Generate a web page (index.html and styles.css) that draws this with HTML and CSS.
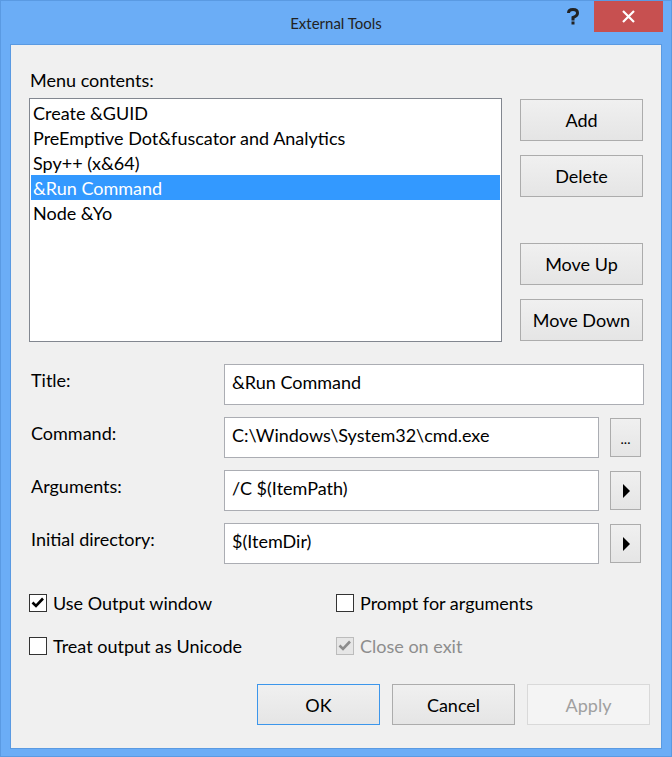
FILE: index.html
```html
<!DOCTYPE html>
<html lang="en">
<head>
    <meta charset="UTF-8">
    <title>External Tools</title>
    <link rel="stylesheet" href="styles.css">
</head>
<body>
    <div class="window">
        <div class="titlebar">
            <span></span>
            <span class="title">External Tools</span>
            <div class="caption">
                <svg class="help" width="12" height="17" viewBox="0 0 12 17">
                    <path d="M1.5 5 Q1.5 1.5 6 1.5 Q10.5 1.5 10.5 5 Q10.5 8 6 9.5 V12.5" stroke="#222" stroke-width="3" fill="none"/>
                    <rect x="4.5" y="13.5" width="3" height="3" fill="#222"/>
                </svg>
                <div class="close">
                    <svg width="13" height="13" viewBox="0 0 13 13">
                        <path d="M1 1 L12 12 M12 1 L1 12" stroke="#fff" stroke-width="2.2"/>
                    </svg>
                </div>
            </div>
        </div>

        <div class="client">
            <div class="caption-label">Menu contents:</div>
            <div class="menu-row">
                <div class="listbox">
                    <div class="item">Create &amp;GUID</div>
                    <div class="item">PreEmptive Dot&amp;fuscator and Analytics</div>
                    <div class="item">Spy++ (x&amp;64)</div>
                    <div class="item selected">&amp;Run Command</div>
                    <div class="item">Node &amp;Yo</div>
                </div>
                <div class="side-buttons">
                    <div class="btn">Add</div>
                    <div class="btn">Delete</div>
                    <div class="btn push">Move Up</div>
                    <div class="btn">Move Down</div>
                </div>
            </div>

            <div class="fields">
                <div class="field-row">
                    <div class="field-label">Title:</div>
                    <div class="textbox wide">&amp;Run Command</div>
                </div>
                <div class="field-row">
                    <div class="field-label">Command:</div>
                    <div class="textbox">C:\Windows\System32\cmd.exe</div>
                    <div class="btn small dots">...</div>
                </div>
                <div class="field-row">
                    <div class="field-label">Arguments:</div>
                    <div class="textbox">/C $(ItemPath)</div>
                    <div class="btn small"><span class="arrow"></span></div>
                </div>
                <div class="field-row">
                    <div class="field-label">Initial directory:</div>
                    <div class="textbox">$(ItemDir)</div>
                    <div class="btn small"><span class="arrow"></span></div>
                </div>
            </div>

            <div class="options">
                <div class="check">
                    <span class="box"><svg width="16" height="16" viewBox="0 0 16 16"><path d="M2.5 7.5 L6 11 L13 3.5" stroke="#000" stroke-width="2.6" fill="none"/></svg></span>
                    Use Output window
                </div>
                <div class="check">
                    <span class="box"></span>
                    Prompt for arguments
                </div>
                <div class="check">
                    <span class="box"></span>
                    Treat output as Unicode
                </div>
                <div class="check disabled">
                    <span class="box"><svg width="16" height="16" viewBox="0 0 16 16"><path d="M2.5 7.5 L6 11 L13 3.5" stroke="#8c8c8c" stroke-width="2.6" fill="none"/></svg></span>
                    Close on exit
                </div>
            </div>

            <div class="dialog-buttons">
                <div class="btn wide-btn default">OK</div>
                <div class="btn wide-btn">Cancel</div>
                <div class="btn wide-btn off">Apply</div>
            </div>
        </div>
    </div>
</body>
</html>
```

FILE: styles.css
```css
:root {
    --frame: #6badf6;
    --frame-edge: #5a9ae2;
    --face: #f0f0f0;
    --ui-font: Lato, "Noto Sans", sans-serif;
}
* {
    box-sizing: border-box;
}
body {
    margin: 0;
    font-family: var(--ui-font);
    font-size: 18px;
    color: #000;
}
.window {
    width: 672px;
    height: 757px;
    display: flex;
    flex-direction: column;
    background: var(--frame);
    border: 1px solid var(--frame-edge);
}
.titlebar {
    height: 43px;
    display: grid;
    grid-template-columns: 1fr auto 1fr;
    align-items: center;
}
.title {
    font-size: 15px;
    color: #222;
}
.caption {
    justify-self: end;
    align-self: start;
    display: flex;
    margin-right: 8px;
}
.help {
    margin: 7px 15px 0 0;
}
.close {
    width: 69px;
    height: 31px;
    background: #c75050;
    display: flex;
    align-items: center;
    justify-content: center;
}
.client {
    flex: 1;
    margin: 0 9px 7px 9px;
    background: var(--face);
    border: 1px solid var(--frame-edge);
    padding: 23px 11px 0 18px;
}
.caption-label {
    line-height: 24px;
    padding-left: 1px;
}
.menu-row {
    display: flex;
    gap: 18px;
    margin-top: 6px;
}
.listbox {
    width: 473px;
    height: 244px;
    background: #fff;
    border: 1px solid #828790;
    padding: 1px;
}
.item {
    height: 25px;
    line-height: 26px;
    padding-left: 2px;
    white-space: nowrap;
}
.item.selected {
    background: #3399ff;
    color: #fff;
}
.side-buttons {
    width: 123px;
    display: flex;
    flex-direction: column;
    gap: 14px;
    padding: 1px 0;
}
.side-buttons .btn {
    height: 42px;
}
.side-buttons .push {
    margin-top: auto;
}
.btn {
    display: flex;
    align-items: center;
    justify-content: center;
    background: linear-gradient(#f0f0f0, #e5e5e5);
    border: 1px solid #acacac;
}
.fields {
    margin-top: 22px;
    display: flex;
    flex-direction: column;
    gap: 12px;
}
.field-row {
    display: flex;
    height: 41px;
}
.field-label {
    width: 195px;
    padding: 4px 0 0 2px;
    line-height: 24px;
}
.textbox {
    width: 375px;
    height: 41px;
    background: #fff;
    border: 1px solid #abadb3;
    padding: 5px 7px 0 7px;
    line-height: 24px;
    white-space: nowrap;
}
.textbox.wide {
    width: 420px;
}
.btn.small {
    width: 31px;
    height: 39px;
    margin: 1px 0 0 11px;
}
.dots {
    font-size: 14px;
    padding-top: 2px;
}
.arrow {
    width: 0;
    height: 0;
    border-top: 7px solid transparent;
    border-bottom: 7px solid transparent;
    border-left: 7px solid #000;
    margin-left: 2px;
}
.options {
    margin-top: 27px;
    display: grid;
    grid-template-columns: 307px auto;
    row-gap: 19px;
}
.check {
    display: flex;
    align-items: center;
    gap: 6px;
    line-height: 24px;
    height: 24px;
}
.box {
    width: 18px;
    height: 18px;
    border: 1px solid #333;
    background: #fff;
    display: flex;
    align-items: center;
    justify-content: center;
}
.check.disabled {
    color: #8d8d8d;
}
.check.disabled .box {
    border-color: #bcbcbc;
    background: #e6e6e6;
}
.dialog-buttons {
    margin-top: 26px;
    display: flex;
    justify-content: flex-end;
    gap: 12px;
}
.wide-btn {
    width: 123px;
    height: 41px;
}
.btn.default {
    border-color: #3c96eb;
}
.btn.off {
    background: #f4f4f4;
    border-color: #d9d9d9;
    color: #a0a0a0;
}
```
